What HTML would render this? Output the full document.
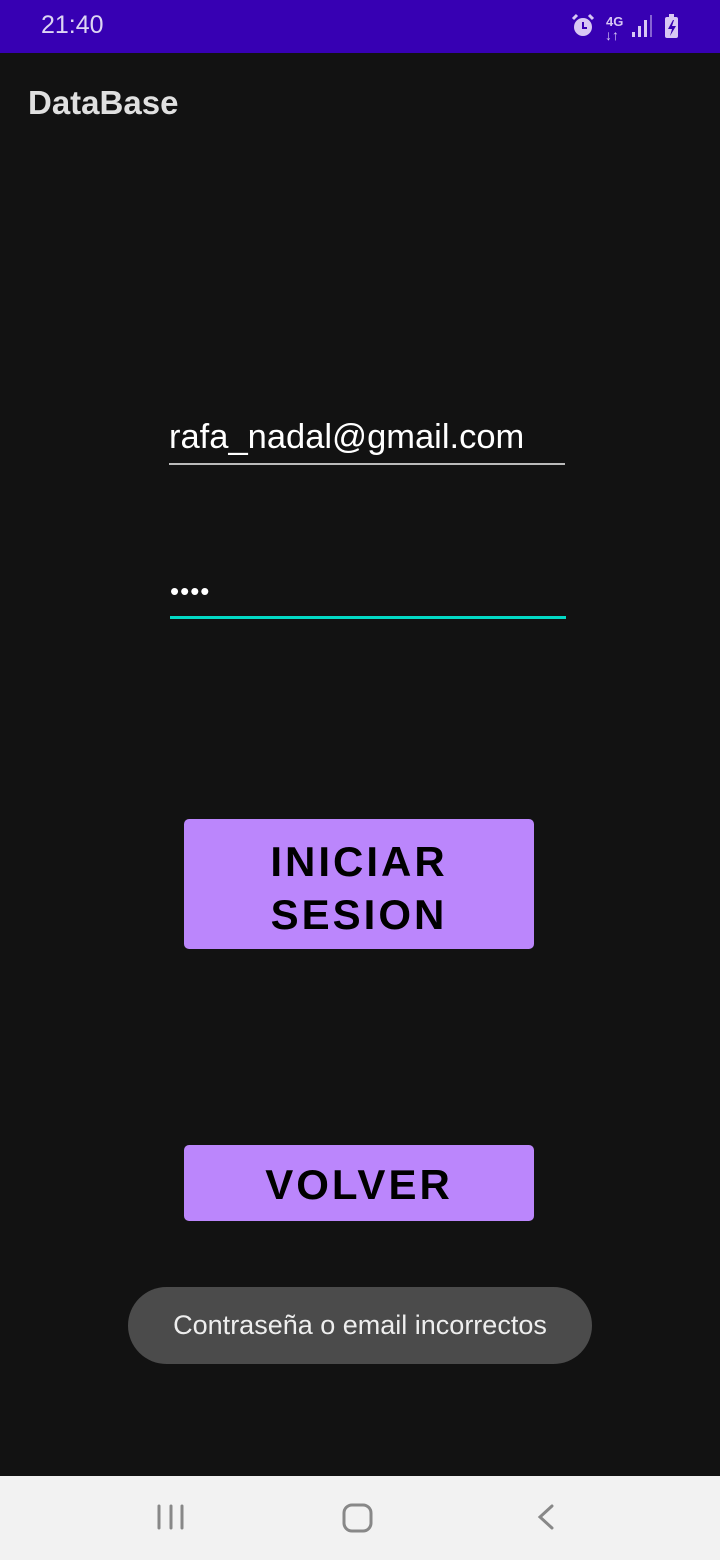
<!DOCTYPE html>
<html><head><meta charset="utf-8"><style>
*{margin:0;padding:0;box-sizing:border-box}
body{width:720px;height:1560px;background:#121212;font-family:"Liberation Sans",sans-serif;position:relative;overflow:hidden}
.abs{position:absolute}
.sb{left:0;top:0;width:720px;height:53px;background:#3700b3}
.btn{background:#bb86fc;border-radius:5px;color:#000;font-size:42px;letter-spacing:3px;text-align:center;font-weight:bold}
</style></head><body>
<div class="abs sb"></div>
<div class="abs" style="left:41px;top:11px;color:#ddd6f3;font-size:25px">21:40</div>
<svg class="abs" style="left:570px;top:12px" width="120" height="30" viewBox="0 0 120 30" fill="#d8c8f4">
<circle cx="13" cy="15" r="9"/><path d="M3 7l4-4M23 7l-4-4" stroke="#d8c8f4" stroke-width="3"/>
<path d="M13 10v6h4" stroke="#3700b3" stroke-width="2" fill="none"/>
<text x="36" y="14" font-size="13" font-weight="bold" font-family="Liberation Sans">4G</text>
<text x="35" y="28" font-size="14" font-weight="bold" font-family="Liberation Sans">↓↑</text>
<rect x="62" y="20" width="3" height="5"/><rect x="68" y="14" width="3" height="11"/><rect x="74" y="8" width="3" height="17"/><rect x="80" y="3" width="2" height="22" opacity=".5"/>
<rect x="95" y="5" width="13" height="21" rx="2"/><rect x="99" y="2" width="5" height="4"/>
<path d="M103 8l-5 9h4l-2 7 6-10h-4l2-6z" fill="#3700b3"/>
</svg>
<div class="abs" style="left:28px;top:84px;color:#e0e0e0;font-size:33px;font-weight:bold">DataBase</div>
<div class="abs" style="left:169px;top:418px;color:#fff;font-size:34.5px">rafa_nadal@gmail.com</div>
<div class="abs" style="left:169px;top:463px;width:396px;height:2px;background:#bbb"></div>
<div class="abs" style="left:170px;top:576px;color:#fff;font-size:26px;letter-spacing:1px">••••</div>
<div class="abs" style="left:170px;top:616px;width:396px;height:3px;background:#03dac5"></div>
<div class="abs btn" style="left:184px;top:819px;width:350px;height:130px;padding-top:16px;line-height:53px">INICIAR<br>SESION</div>
<div class="abs btn" style="left:184px;top:1145px;width:350px;height:76px;line-height:80px">VOLVER</div>
<div class="abs" style="left:128px;top:1287px;width:464px;height:77px;border-radius:39px;background:#4b4b4b;color:#eee;font-size:27px;text-align:center;line-height:77px">Contraseña o email incorrectos</div>
<div class="abs" style="left:0;top:1476px;width:720px;height:84px;background:#f2f2f2"></div>
<svg class="abs" style="left:0;top:1476px" width="720" height="84" fill="none" stroke="#888" stroke-width="3" stroke-linecap="round">
<path d="M159 30v22M171 30v22M182 30v22"/>
<rect x="344" y="29" width="27" height="26" rx="8"/>
<path d="M552 30l-12 11 12 11"/>
</svg>
</body></html>
